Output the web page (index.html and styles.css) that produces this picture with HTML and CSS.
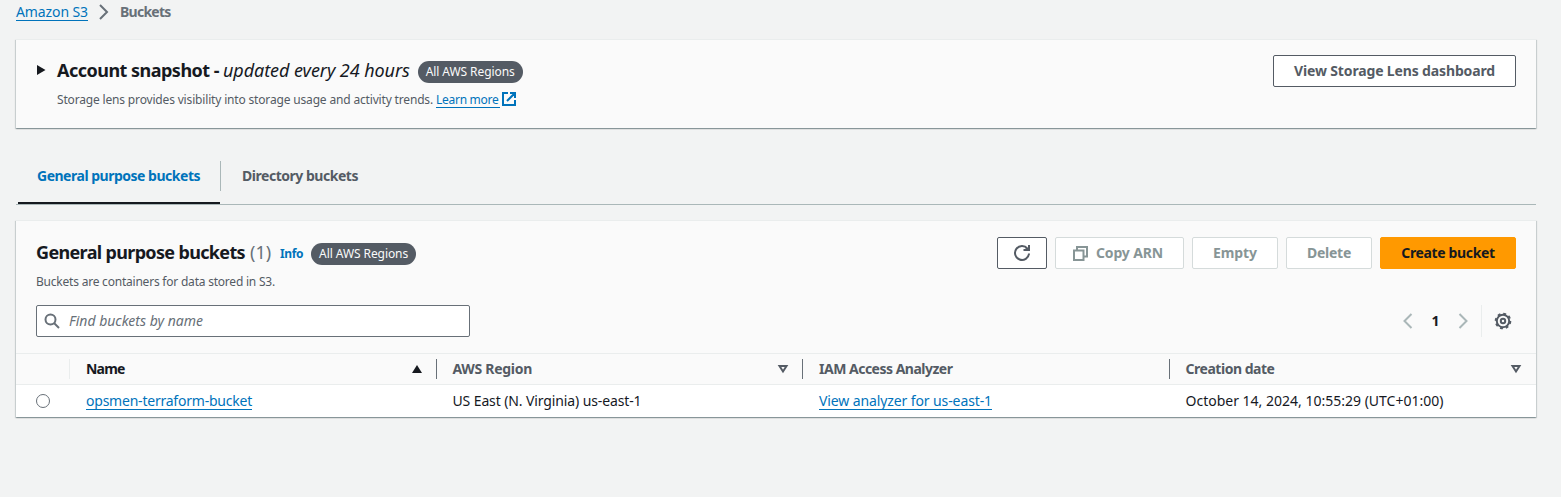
FILE: index.html
```
<!DOCTYPE html>
<html lang="en">
<head>
<meta charset="utf-8">
<title>S3 buckets</title>
<link rel="stylesheet" href="styles.css">
</head>
<body>
<nav class="breadcrumb">
  <a class="link crumb">Amazon S3</a>
  <svg class="crumb-arrow" width="10" height="16" viewBox="0 0 10 16"><path d="M1 1l7 7-7 7"/></svg>
  <span class="crumb-current">Buckets</span>
</nav>

<section class="panel snapshot">
  <svg class="expand" width="9" height="12" viewBox="0 0 9 12"><path d="M0 1l8.500 5L0 11z"/></svg>
  <div class="snapshot-body">
    <div class="title-row">
      <h2 class="title snapshot-title">Account snapshot -</h2>
      <em class="updated">updated every 24 hours</em>
      <span class="badge"><span class="badge-text">All AWS Regions</span></span>
    </div>
    <p class="desc snapshot-desc"><span class="lens-text">Storage lens provides visibility into storage usage and activity trends.</span>
      <a class="link learn">Learn more</a>
      <svg class="external" width="14" height="14" viewBox="0 0 14 14"><path d="M6 1H1v12h12V8M8 1h5v5M13 1 5 9"/></svg>
    </p>
  </div>
  <button class="btn lens"><span class="lens-label">View Storage Lens dashboard</span></button>
</section>

<div class="tabs">
  <div class="tab active"><span class="tab-general">General purpose buckets</span></div>
  <div class="tab"><span class="tab-directory">Directory buckets</span></div>
</div>

<section class="panel buckets">
  <header class="buckets-head">
    <div class="title-row">
      <h2 class="title buckets-title">General purpose buckets</h2>
      <span class="count">(1)</span>
      <a class="info">Info</a>
      <span class="badge"><span class="badge-text">All AWS Regions</span></span>
    </div>
    <div class="actions">
      <button class="btn refresh"><svg width="18" height="18" viewBox="0 0 18 18"><path d="M16 9.500A7 7 0 1 1 14.500 4.600M10.500 6H16V1M12.500 5.500 16 5"/></svg></button>
      <button class="btn disabled copy"><svg width="15" height="15" viewBox="0 0 15 15"><path d="M1 4.500h9.500V14H1zM4 4.500V1h10v9.500h-3.500"/></svg><span class="copy-label">Copy ARN</span></button>
      <button class="btn disabled empty"><span class="empty-label">Empty</span></button>
      <button class="btn disabled delete"><span class="delete-label">Delete</span></button>
      <button class="btn create"><span class="create-label">Create bucket</span></button>
    </div>
  </header>
  <p class="desc buckets-desc"><span class="containers-text">Buckets are containers for data stored in S3.</span></p>
  <div class="filter">
    <div class="search">
      <svg width="16" height="16" viewBox="0 0 16 16"><circle cx="6.500" cy="6.500" r="5"/><path d="M10 10l5 5"/></svg>
      <span class="placeholder">Find buckets by name</span>
    </div>
    <div class="pager">
      <svg class="arrow" width="10" height="16" viewBox="0 0 10 16"><path d="M8.500 1 1.500 8l7 7"/></svg>
      <span class="page">1</span>
      <svg class="arrow" width="10" height="16" viewBox="0 0 10 16"><path d="M1.500 1l7 7-7 7"/></svg>
      <span class="settings"><svg width="18" height="18" viewBox="0 0 18 18"><circle cx="9" cy="9" r="6.200"/><circle cx="9" cy="9" r="2.200"/><circle class="teeth" cx="9" cy="9" r="7.300"/></svg></span>
    </div>
  </div>
  <div class="grid-row head">
    <div class="cell"></div>
    <div class="cell sorted"><span class="h-name">Name</span><svg width="12" height="10" viewBox="0 0 12 10"><path d="M6 1 11 9H1z"/></svg></div>
    <div class="cell"><span class="h-region">AWS Region</span><svg width="12" height="10" viewBox="0 0 12 10"><path d="M2.500 2h7L6 7.500z"/></svg></div>
    <div class="cell"><span class="h-iam">IAM Access Analyzer</span></div>
    <div class="cell"><span class="h-date">Creation date</span><svg width="12" height="10" viewBox="0 0 12 10"><path d="M2.500 2h7L6 7.500z"/></svg></div>
  </div>
  <div class="grid-row data">
    <div class="cell"><span class="radio"></span></div>
    <div class="cell"><a class="link d-name">opsmen-terraform-bucket</a></div>
    <div class="cell"><span class="d-region">US East (N. Virginia) us-east-1</span></div>
    <div class="cell"><a class="link d-iam">View analyzer for us-east-1</a></div>
    <div class="cell"><span class="d-date">October 14, 2024, 10:55:29 (UTC+01:00)</span></div>
  </div>
</section>
</body>
</html>
```
FILE: styles.css
```
*{box-sizing:border-box}
body{margin:0;padding:0 25px 0 16px;height:497px;overflow:hidden;background:#f2f3f3;color:#16191f;font:14px/22px "Noto Sans",sans-serif}
h2,p{margin:0}
svg{display:block;flex:none;fill:none;stroke:currentColor;stroke-width:2}
.link{color:#0073bb;line-height:16px;border-bottom:1px solid #0073bb;white-space:nowrap}
.breadcrumb{display:flex;align-items:center;height:24px}
.crumb{letter-spacing:-.1px}
.crumb-arrow{margin:0 11px;color:#687078}
.crumb-current{font-weight:700;color:#687078;letter-spacing:-.75px}
.panel{background:#fafafa;box-shadow:0 1px 1px rgba(0,28,36,.25),1px 1px 1px rgba(0,28,36,.13),-1px 1px 1px rgba(0,28,36,.13);border-top:1px solid #eaeded}
span,h2,em,a{white-space:nowrap}
.snapshot{display:flex;height:89px;margin-top:15px;padding:15px 20px 0 21px}
.expand{fill:#16191f;stroke:none;margin:9px 11px 0 0}
.snapshot-body{flex:1}
.title-row{display:flex;align-items:center;height:32px}
.title{font-size:18px;line-height:22px;font-weight:700;padding-bottom:2px}
.snapshot-title{letter-spacing:-.517px}
.updated{font-size:18px;margin-left:4px;padding-bottom:2px;letter-spacing:-.07px}
.badge{display:flex;align-items:center;justify-content:center;width:105px;height:22px;margin:1px 0 0 8px;border-radius:11px;background:#545b64;color:#fafafa;font-size:12px}
.badge-text{letter-spacing:-.08px}
.desc{display:flex;align-items:center;font-size:12px;color:#545b64}
.snapshot-desc{margin-top:2px}
.lens-text{letter-spacing:-.167px}
.learn{margin-left:3px;padding-right:2px;line-height:15px;letter-spacing:-.275px}
.external{margin:-2px 0 0 1.500px;color:#0073bb}
.btn{display:flex;align-items:center;justify-content:center;height:32px;padding:0;border:1px solid #545b64;border-radius:2px;background:#fff;color:#545b64;font:700 14px/20px "Noto Sans",sans-serif}
.lens{width:243px}
.lens-label{letter-spacing:-.144px}
.tabs{display:flex;height:50px;margin-top:27px;padding-left:2px;border-bottom:1px solid #aab7b8}
.tab{height:49px;padding:10px 20px 0 21px;font-weight:700;color:#545b64}
.active{position:relative;width:202px;margin-right:1px;padding-left:19px;color:#0073bb;border-bottom:2px solid #16191f}
.active::after{content:"";position:absolute;right:-1px;top:6px;width:1px;height:30px;background:#aab7b8}
.tab-general{letter-spacing:-.49px}
.tab-directory{letter-spacing:-.472px}
.buckets{margin-top:15px;height:197px}
.buckets-head{display:flex;justify-content:space-between;padding:16px 20px 0}
.buckets-title{letter-spacing:-.656px}
.count{margin-left:5px;padding-bottom:2px;font-size:18px;color:#687078}
.info{margin:2px 0 0 9px;font-size:12px;font-weight:700;color:#0073bb;letter-spacing:-.4px}
.buckets-head .badge{margin-top:2px}
.actions{display:flex;gap:8px}
.disabled{border-color:#d5dbdb;color:#879596}
.refresh{width:50px}
.copy{width:129px;gap:8px;padding-right:3px}
.copy-label{letter-spacing:-.15px}
.empty,.delete{width:86px}
.empty-label{letter-spacing:-.08px}
.delete-label{letter-spacing:-.263px}
.create{width:136px;background:#f90;border-color:#f90;color:#16191f}
.create-label{letter-spacing:-.352px}
.buckets-desc{padding-left:20px;margin-top:2px}
.containers-text{letter-spacing:-.215px}
.filter{display:flex;justify-content:space-between;padding:12px 20px 16px}
.search{display:flex;align-items:center;width:434px;height:32px;padding-left:7px;gap:9px;border:1px solid #687078;border-radius:2px;background:#fff;color:#687078}
.placeholder{font-style:italic}
.pager{display:flex;align-items:center;height:32px;font-weight:700}
.arrow{color:#aab7b8}
.page{width:45px;text-align:center}
.settings{display:flex;align-items:center;height:32px;margin-left:13px;padding:0 4px 0 12px;border-left:1px solid #eaeded;color:#545b64}
.teeth{stroke-width:2;stroke-dasharray:2.867 2.867}
.grid-row{display:grid;grid-template-columns:54px repeat(4,1fr);border-top:1px solid #eaeded}
.head{height:31px;font-weight:700;color:#545b64}
.cell{position:relative;display:flex;align-items:center;justify-content:space-between;padding:0 14px 0 16px}
.head .cell:not(:last-child)::after{content:"";position:absolute;right:0;top:5px;width:1px;height:20px;background:#687078}
.head .cell:first-child::after{background:#eaeded}
.head .sorted{color:#16191f}
.sorted path{fill:currentColor;stroke:none}
.h-name{letter-spacing:-.82px}
.h-region{letter-spacing:-.295px}
.h-iam{letter-spacing:-.502px}
.h-date{letter-spacing:-.472px}
.data{height:33px;background:#fff}
.d-name{letter-spacing:-.221px}
.d-region{letter-spacing:-.115px}
.d-iam{letter-spacing:-.107px}
.radio{width:14px;height:14px;margin-left:4px;border:1px solid #687078;border-radius:50%}
```
